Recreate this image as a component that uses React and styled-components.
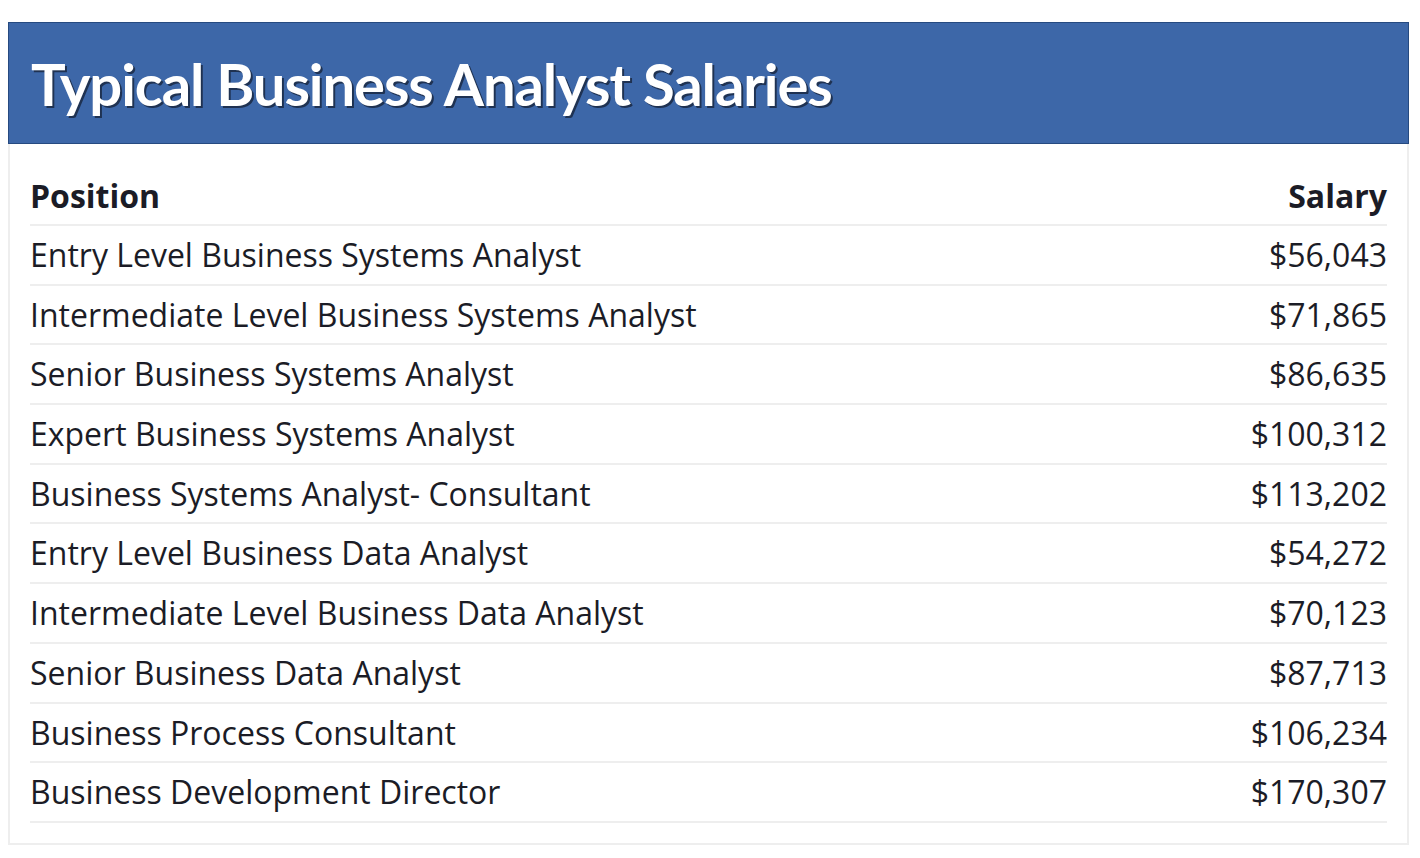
import React from 'react';
import styled, { createGlobalStyle } from 'styled-components';

const GlobalStyle = createGlobalStyle`
  html, body { margin: 0; padding: 0; background: #fff; }
  body { padding: 22px 11px 0 8px; font-family: "Open Sans", "Liberation Sans", sans-serif; }
`;

const Header = styled.div`
  background: #3d67a8;
  border: 1px solid #264a80;
  height: 120px;
  display: flex;
  align-items: center;
  padding: 0 22px;
`;

const Title = styled.h1`
  margin: 0;
  color: #fff;
  font-family: Lato, "Noto Sans", sans-serif;
  font-weight: 700;
  font-size: 58px;
  letter-spacing: -1.1px;
  text-shadow: 2px 2px 0 #1f3252;
`;

const Panel = styled.div`
  border: 2px solid #eeeeee;
  border-top: none;
  padding: 26px 20px 20px 20px;
`;

const Table = styled.table`
  width: 100%;
  border-collapse: collapse;
  color: #1b1c26;
  font-size: 32px;
`;

const Cell = styled.td`
  text-align: ${p => (p.$right ? 'right' : 'left')};
  border-bottom: 2px solid #eeeeee;
  padding: 7px 0 6.7px 0;
  line-height: 44px;
  font-weight: 400;
`;

const HeadCell = styled(Cell).attrs({ as: 'th' })`
  font-weight: 700;
  padding-top: 4px;
  padding-bottom: 6px;
`;

const rows = [
  ['Entry Level Business Systems Analyst', '$56,043'],
  ['Intermediate Level Business Systems Analyst', '$71,865'],
  ['Senior Business Systems Analyst', '$86,635'],
  ['Expert Business Systems Analyst', '$100,312'],
  ['Business Systems Analyst- Consultant', '$113,202'],
  ['Entry Level Business Data Analyst', '$54,272'],
  ['Intermediate Level Business Data Analyst', '$70,123'],
  ['Senior Business Data Analyst', '$87,713'],
  ['Business Process Consultant', '$106,234'],
  ['Business Development Director', '$170,307'],
];

export default function App() {
  return (
    <>
      <GlobalStyle />
      <Header>
        <Title>Typical Business Analyst Salaries</Title>
      </Header>
      <Panel>
        <Table>
          <thead>
            <tr>
              <HeadCell>Position</HeadCell>
              <HeadCell $right>Salary</HeadCell>
            </tr>
          </thead>
          <tbody>
            {rows.map(([pos, sal]) => (
              <tr key={pos}>
                <Cell>{pos}</Cell>
                <Cell $right>{sal}</Cell>
              </tr>
            ))}
          </tbody>
        </Table>
      </Panel>
    </>
  );
}
